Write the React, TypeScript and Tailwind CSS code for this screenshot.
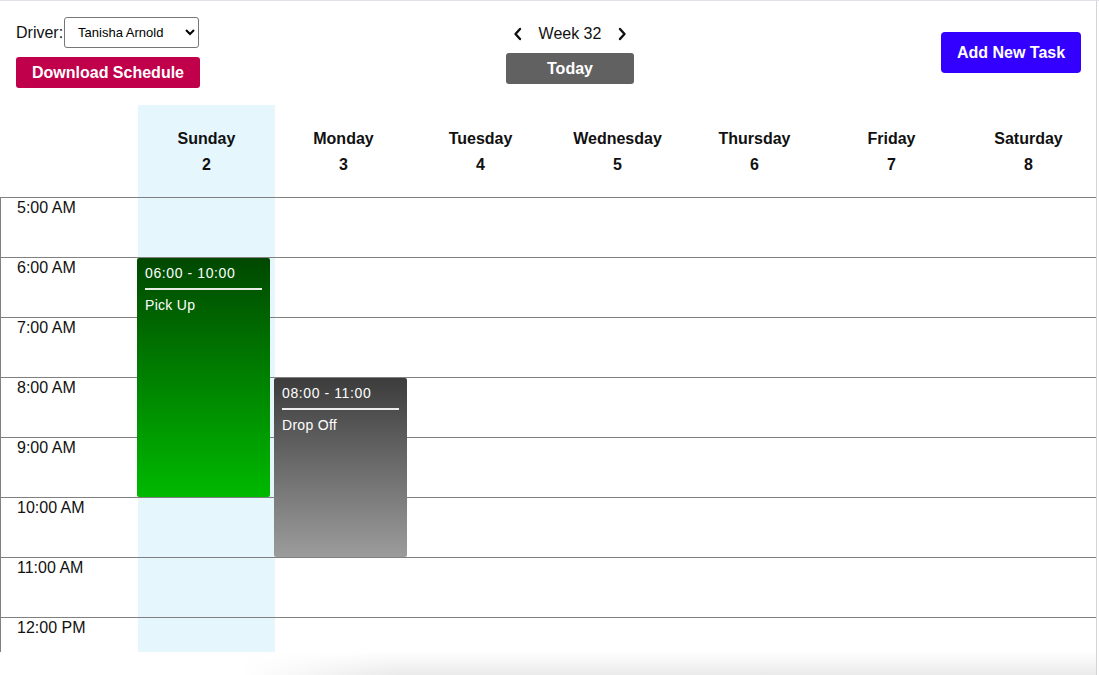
import React from "react";

const days = [
  { name: "Sunday", num: 2 },
  { name: "Monday", num: 3 },
  { name: "Tuesday", num: 4 },
  { name: "Wednesday", num: 5 },
  { name: "Thursday", num: 6 },
  { name: "Friday", num: 7 },
  { name: "Saturday", num: 8 },
];

const hours = ["5:00 AM", "6:00 AM", "7:00 AM", "8:00 AM", "9:00 AM", "10:00 AM", "11:00 AM", "12:00 PM"];

function Chevron({ dir }: { dir: "left" | "right" }) {
  return (
    <svg width="10" height="14" viewBox="0 0 10 14" fill="none">
      <path
        d={dir === "left" ? "M7 2 L2.5 7 L7 12" : "M3 2 L7.5 7 L3 12"}
        stroke="#111"
        strokeWidth="2.4"
        strokeLinecap="round"
        strokeLinejoin="round"
      />
    </svg>
  );
}

function EventCard({ time, title, className }: { time: string; title: string; className: string }) {
  return (
    <div className={`absolute w-[133px] rounded-[2px] px-2 pt-[6px] text-white font-['Liberation_Sans',Arial,sans-serif] ${className}`}>
      <div className="text-[14px] leading-[18px] tracking-[0.6px]">{time}</div>
      <div className="mt-[6px] h-[2px] bg-white/90" />
      <div className="mt-[6px] text-[14px] leading-[18px] tracking-[0.3px]">{title}</div>
    </div>
  );
}

export default function App() {
  return (
    <div className="relative w-[1099px] h-[675px] overflow-hidden bg-white border-t border-[#e1e1e8] font-['Liberation_Sans',Arial,sans-serif] text-[#111] text-[16px]">
      <div className="w-[1097px] border-r border-[#d4d4d4] h-full">
        {/* top bar */}
        <div className="flex items-start h-[104px]">
          <div className="w-[506px] pl-4 pt-4">
            <div className="flex items-center h-[31px]">
              <span className="leading-none">Driver:</span>
              <select
                defaultValue="Tanisha Arnold"
                className="ml-px w-[135px] h-[31px] border border-[#767676] rounded-[3px] bg-white pl-[9px] text-[13px] text-black"
              >
                <option>Tanisha Arnold</option>
                <option>James Carter</option>
                <option>Maria Lopez</option>
              </select>
            </div>
            <button className="mt-[9px] w-[184px] h-[31px] rounded-[3px] bg-[#c0004a] text-white font-bold text-[16px]">
              Download Schedule
            </button>
          </div>

          <div className="w-[128px] pt-6 flex flex-col items-center">
            <div className="flex items-center h-[18px] gap-[16px]">
              <Chevron dir="left" />
              <span className="leading-none">Week 32</span>
              <Chevron dir="right" />
            </div>
            <button className="mt-[10px] w-[128px] h-[31px] rounded-[3px] bg-[#616161] text-white font-bold text-[16px]">
              Today
            </button>
          </div>

          <div className="flex-1 flex justify-end pr-[15px] pt-[31px]">
            <button className="w-[140px] h-[41px] rounded-[4px] bg-[#3300ff] text-white font-bold text-[16px]">
              Add New Task
            </button>
          </div>
        </div>

        {/* calendar */}
        <div className="relative">
          <div className="grid grid-cols-[138px_repeat(7,137px)] h-[92px]">
            <div />
            {days.map((d, i) => (
              <div
                key={d.name}
                className={`flex flex-col items-center pt-[21px] font-bold leading-[26px] ${i === 0 ? "bg-[#e5f6fd]" : ""}`}
              >
                <span>{d.name}</span>
                <span>{d.num}</span>
              </div>
            ))}
          </div>

          <div className="relative h-[455px] border-l border-[#808080]">
            <div className="absolute left-[137px] top-0 bottom-0 w-[137px] bg-[#e5f6fd]" />
            {hours.map((h) => (
              <div key={h} className="relative h-[60px] border-t border-[#808080]">
                <span className="absolute left-4 top-0 leading-[20px]">{h}</span>
              </div>
            ))}
            <EventCard
              time="06:00 - 10:00"
              title="Pick Up"
              className="left-[136px] top-[61px] h-[239px] bg-[linear-gradient(to_bottom,#004800,#00b900)]"
            />
            <EventCard
              time="08:00 - 11:00"
              title="Drop Off"
              className="left-[273px] top-[181px] h-[179px] bg-[linear-gradient(to_bottom,#3c3c3c,#9c9c9c)]"
            />
          </div>

          <div className="relative h-[25px] bg-[linear-gradient(to_bottom,#ffffff,#e8e8e8)]">
            <div className="absolute inset-y-0 left-0 w-[400px] bg-[linear-gradient(to_right,#ffffff_60%,rgba(255,255,255,0))]" />
          </div>
        </div>
      </div>
    </div>
  );
}
